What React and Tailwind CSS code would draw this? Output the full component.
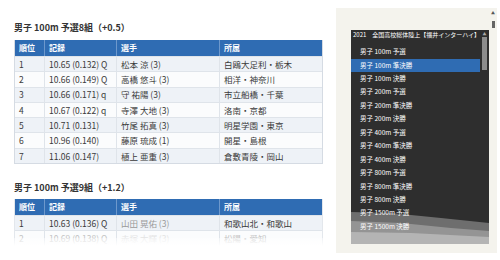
import React from "react";

const heat8 = [
  ["1", "10.65 (0.132) Q", "松本 涼 (3)", "白鴎大足利・栃木"],
  ["2", "10.66 (0.149) Q", "高橋 悠斗 (3)", "相洋・神奈川"],
  ["3", "10.66 (0.171) q", "守 祐陽 (3)", "市立船橋・千葉"],
  ["4", "10.67 (0.122) q", "寺澤 大地 (3)", "洛南・京都"],
  ["5", "10.71 (0.131)", "竹尾 拓真 (3)", "明星学園・東京"],
  ["6", "10.96 (0.140)", "藤原 琉成 (1)", "開星・島根"],
  ["7", "11.06 (0.147)", "植上 亜重 (3)", "倉敷青陵・岡山"],
];

const events = [
  "男子 100m 予選",
  "男子 100m 準決勝",
  "男子 100m 決勝",
  "男子 200m 予選",
  "男子 200m 準決勝",
  "男子 200m 決勝",
  "男子 400m 予選",
  "男子 400m 準決勝",
  "男子 400m 決勝",
  "男子 800m 予選",
  "男子 800m 準決勝",
  "男子 800m 決勝",
  "男子 1500m 予選",
  "男子 1500m 決勝",
];

const cols = "grid grid-cols-[29px_72px_103px_105px]";

function HeaderRow() {
  return (
    <div className={`${cols} h-[16px] bg-[#2f6cb3] text-white font-bold text-[8px] items-center`}>
      {["順位", "記録", "選手", "所属"].map((h, i) => (
        <div
          key={h}
          className={`h-full flex items-center pl-[4px] ${i > 0 ? "border-l border-[#6d98cc]" : ""}`}
        >
          {h}
        </div>
      ))}
    </div>
  );
}

function Row({ cells, odd, faded, nameGray }) {
  return (
    <div
      className={`${cols} h-[15.3px] text-[8.5px] border-t border-[#dfe4ea] ${
        odd ? "bg-[#eef2f7]" : "bg-[#fbfcfd]"
      } ${faded ? "text-[#c4c4c4]" : "text-[#3a3a3a]"}`}
    >
      {cells.map((c, i) => (
        <div
          key={i}
          className={`flex items-center pl-[4px] whitespace-nowrap ${
            i > 0 ? "border-l border-[#dfe4ea]" : ""
          } ${i === 2 && nameGray ? "text-[#9a9a9a]" : ""} ${i === 2 && faded ? "text-[#e4e4e4]" : ""}`}
        >
          {c}
        </div>
      ))}
    </div>
  );
}

export default function App() {
  return (
    <div className="w-[500px] h-[260px] bg-white flex overflow-hidden font-['Noto_Sans_CJK_JP',sans-serif]">
      <div className="w-[336px] pl-[14px] pt-[21px] flex flex-col">
        <p className="h-[13px] leading-[13px] text-[9px] font-bold text-[#333] whitespace-nowrap">
          男子 100m 予選8組（+0.5）
        </p>
        <div className="mt-[6px] w-[309px] border-x border-b border-[#d5dbe3]">
          <HeaderRow />
          {heat8.map((r, i) => (
            <Row key={i} cells={r} odd={i % 2 === 0} />
          ))}
        </div>

        <p className="mt-[17px] h-[13px] leading-[13px] text-[9px] font-bold text-[#333] whitespace-nowrap">
          男子 100m 予選9組（+1.2）
        </p>
        <div className="mt-[5px] w-[309px] border-x border-[#e3e7ec] relative">
          <HeaderRow />
          <Row cells={["1", "10.63 (0.136) Q", "山田 晃佑 (3)", "和歌山北・和歌山"]} odd nameGray />
          <Row cells={["2", "10.69 (0.138) Q", "赤塚 大輝 (3)", "松陽・愛知"]} faded />
          <div className="absolute left-[-1px] right-[-1px] bottom-0 h-[8px] bg-gradient-to-b from-white/40 to-white" />
        </div>
      </div>

      <div className="w-[161px] mt-[8px] h-[245px] bg-[#f4f3ed] flex relative">
        <div className="ml-[15px] mt-[22px] w-[138px] h-[214px] bg-[#2e2e2e] relative overflow-hidden flex">
          <svg className="absolute left-0 bottom-0" width="138" height="40" viewBox="0 0 138 40">
            <polygon points="0,8 40,9 90,14 138,19 138,40 0,40" fill="#6e6e6e" />
            <polygon points="0,17 50,19 100,24 138,27 138,40 0,40" fill="#949494" />
            <polygon points="0,28 60,29 138,33 138,40 0,40" fill="#b4b4b4" />
          </svg>
          <div className="relative flex-1 flex flex-col text-white">
            <p className="pl-[2px] h-[15.3px] pt-[1px] text-[6px] leading-[8px] whitespace-nowrap">
              2021　全国高校総体陸上【福井インターハイ】
            </p>
            {events.map((e, i) => (
              <div
                key={e}
                className={`h-[13.45px] flex items-center pl-[9px] text-[6.5px] whitespace-nowrap ${
                  i === 1 ? "bg-[#2f6cb3]" : ""
                }`}
              >
                {e}
              </div>
            ))}
          </div>
          <div className="relative w-[9px] flex flex-col items-center pt-[2px]">
            <span className="text-[4px] leading-[4px] text-[#aaa]">▲</span>
            <div className="mt-[1px] w-[5px] h-[33px] bg-[#8c8c8c]" />
          </div>
        </div>
        <div className="w-[8px] flex flex-col items-center pt-[3px]">
          <span className="text-[4px] leading-[4px] text-[#555]">▲</span>
          <div className="mt-[6px] w-[3px] h-[7px] bg-[#666]" />
        </div>
      </div>
    </div>
  );
}
